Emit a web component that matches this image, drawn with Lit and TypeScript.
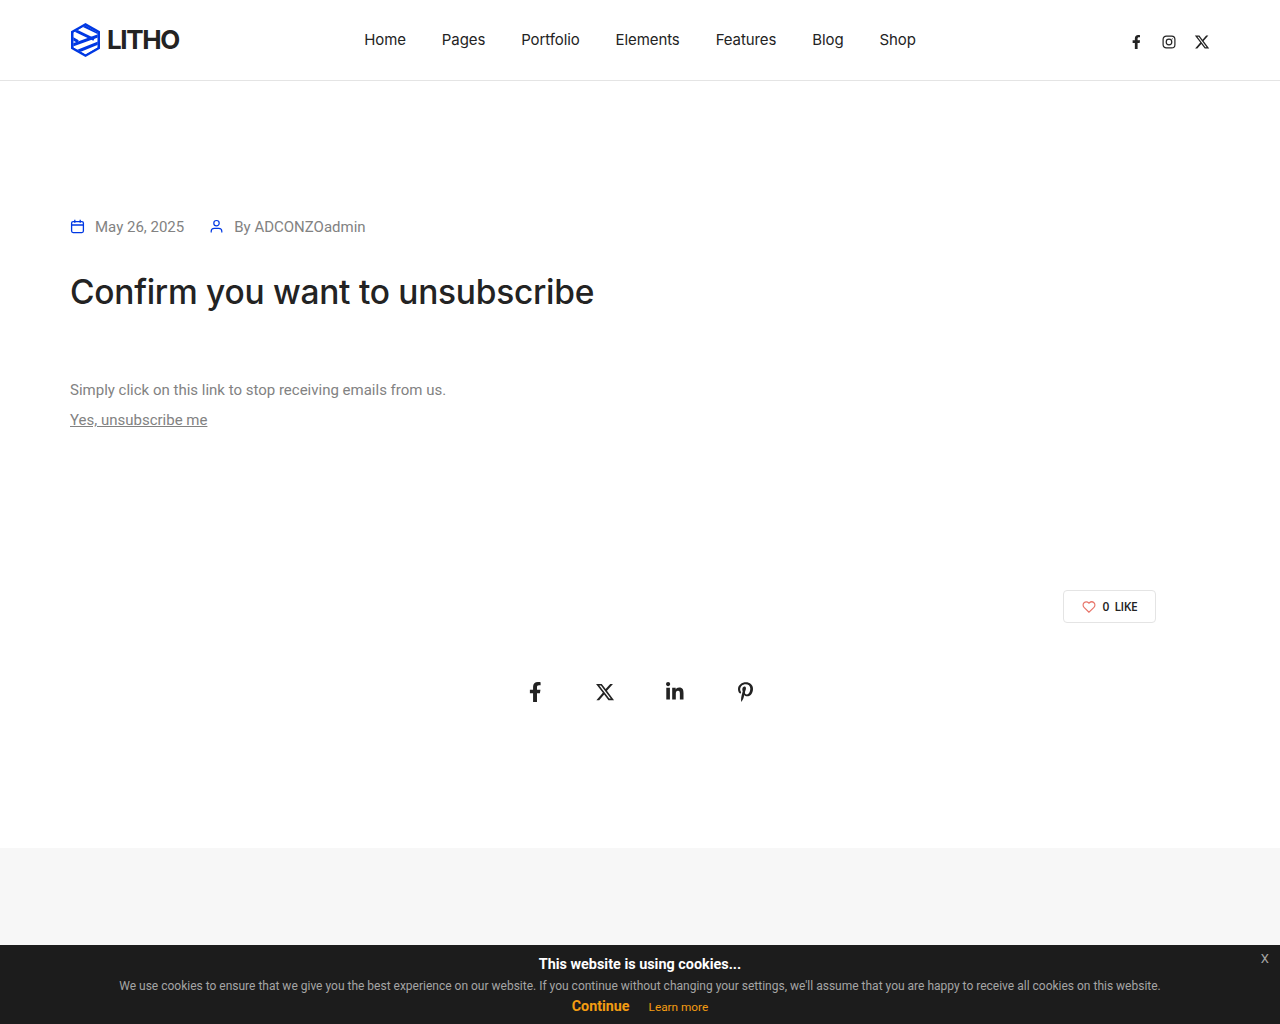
import { LitElement, html, css, svg } from "lit";
import { customElement } from "lit/decorators.js";

const F = { box: "0 0 320 512", d: "M279.14 288l14.22-92.66h-88.91v-60.13c0-25.35 12.42-50.06 52.24-50.06h40.42V6.26S260.43 0 225.36 0c-73.22 0-121.08 44.38-121.08 124.72v70.62H22.89V288h81.39v224h100.17V288z" };
const X = { box: "0 0 512 512", d: "M389.2 48h70.6L305.6 224.2 487 464H345L233.7 318.6 106.5 464H35.8L200.7 275.5 26.8 48H172.4L272.9 180.9 389.2 48zM364.4 421.8h39.1L151.1 88h-42L364.4 421.8z" };
const LI = { box: "0 0 448 512", d: "M100.28 448H7.4V148.9h92.88zM53.79 108.1C24.09 108.1 0 83.5 0 53.8a53.79 53.79 0 0 1 107.58 0c0 29.7-24.1 54.3-53.79 54.3zM447.9 448h-92.68V302.4c0-34.7-.7-79.2-48.29-79.2-48.29 0-55.69 37.7-55.69 76.7V448h-92.78V148.9h89.08v40.8h1.3c12.4-23.5 42.69-48.3 87.88-48.3 94 0 111.28 61.9 111.28 142.3V448z" };
const PIN = { box: "0 0 384 512", d: "M204 6.5C101.4 6.5 0 74.9 0 185.6 0 256 39.6 296 63.6 296c9.9 0 15.6-27.6 15.6-35.4 0-9.3-23.7-29.1-23.7-67.8 0-80.4 61.2-137.4 140.4-137.4 68.1 0 118.5 38.7 118.5 109.8 0 53.1-21.3 152.7-90.3 152.7-24.9 0-46.2-18-46.2-43.8 0-37.8 26.4-74.4 26.4-113.4 0-66.2-93.9-54.2-93.9 25.8 0 16.8 2.1 35.4 9.6 50.7-13.8 59.4-42 147.9-42 209.1 0 18.9 2.7 37.5 4.5 56.4 3.4 3.8 1.7 3.4 6.9 1.5 50.4-69 48.6-82.5 71.4-172.8 12.3 23.4 44.1 36 69.3 36 106.2 0 153.9-103.5 153.9-196.8C384 71.3 298.2 6.5 204 6.5z" };

@customElement("app-root")
export class AppRoot extends LitElement {
  static styles = css`
    :host { display: block; font-family: Roboto, "Liberation Sans", sans-serif; color: #828282; background: #fff; height: 1024px; overflow: hidden; position: relative; }
    a { color: inherit; text-decoration: none; }
    svg { display: block; }
    header { height: 80px; border-bottom: 1px solid #e4e4e4; display: grid; grid-template-columns: 1fr auto 1fr; align-items: center; padding: 0 70px; }
    .logo { display: flex; align-items: center; gap: 6px; }
    .logo-text { font: 700 26px/34px Inter, sans-serif; letter-spacing: -1.4px; color: #232323; }
    nav { display: flex; gap: 36px; font: 400 15px/20px Inter, sans-serif; color: #232323; letter-spacing: -0.1px; }
    .social { display: flex; justify-content: flex-end; align-items: center; gap: 17px; padding: 3px 0 0 0; color: #232323; }
    .social .ico { width: 16px; display: flex; justify-content: center; }
    main { height: 767px; padding: 0 70px; box-sizing: border-box; display: flex; flex-direction: column; }
    .meta { display: flex; align-items: center; margin-top: 136px; font-size: 15px; line-height: 20px; }
    .meta svg { color: #0038e3; margin-top: -2px; }
    .meta span { margin-left: 10px; }
    .meta .by { margin-left: 25px; }
    h1 { margin: 30px 0 0; font: 500 33.5px/50px Inter, sans-serif; color: #232323; letter-spacing: -0.27px; }
    p { margin: 58px 0 0; font-size: 15px; line-height: 30px; }
    .unsub { font-size: 15px; line-height: 30px; text-decoration: underline; }
    .like-row { display: flex; justify-content: flex-end; margin: 155px 54px 0 0; }
    .like { box-sizing: border-box; width: 93px; height: 33px; border: 1px solid #e4e4e4; border-radius: 4px; display: flex; align-items: center; justify-content: center; gap: 7px; font: 600 12px/16px "Open Sans", sans-serif; letter-spacing: -0.4px; color: #232323; }
    .share { display: flex; justify-content: center; margin-top: 59px; color: #232323; }
    .share .ico { width: 70px; display: flex; justify-content: center; }
    .grey { height: 177px; background: #f7f7f7; }
    .cookie { position: absolute; left: 0; right: 0; bottom: 0; height: 79px; background: #1c1c1c; color: #a5a5a5; text-align: center; display: flex; flex-direction: column; align-items: center; }
    .cookie b { color: #fff; font-size: 14.4px; line-height: 20px; margin-top: 10px; font-weight: 700; }
    .cookie .msg { font-size: 12px; line-height: 16px; margin-top: 3px; }
    .actions { display: flex; align-items: baseline; gap: 19px; margin-top: 2px; color: #f39c12; line-height: 20px; }
    .actions strong { font-size: 14.3px; font-weight: 700; }
    .actions span { font-size: 11.8px; }
    .x { position: absolute; top: 5px; right: 11px; font-size: 13px; line-height: 18px; color: #a5a5a5; }
  `;

  private icon(i: { box: string; d: string }, size: number) {
    return html`<span class="ico"><svg height=${size} viewBox=${i.box} fill="currentColor">${svg`<path d=${i.d}></path>`}</svg></span>`;
  }

  render() {
    return html`
      <header>
        <a class="logo" href="#">
          <svg width="31" height="36" viewBox="0 0 31 36" fill="none">
            <defs>
              <clipPath id="hex"><path d="M15.5 3.5 27.7 10.5v15L15.5 32.5 3.3 25.5v-15z"></path></clipPath>
            </defs>
            <path d="M15.5 1 30 9.3v17.4L15.5 35 1 26.7V9.3z" fill="#0038e3"></path>
            <g clip-path="url(#hex)">
              <path d="M15.5 3.5 27.7 10.5v15L15.5 32.5 3.3 25.5v-15z" fill="#fff"></path>
              <path d="M0 6 24 17.500M6 0l26 12.500M0 15 8 19.500" stroke="#0038e3" stroke-width="3"></path>
              <path d="M0 24 32 12.500M6 30 32 19.500M12 36l20-9" stroke="#0038e3" stroke-width="3"></path>
            </g>
          </svg>
          <span class="logo-text">LITHO</span>
        </a>
        <nav>
          <a href="#">Home</a><a href="#">Pages</a><a href="#">Portfolio</a><a href="#">Elements</a><a href="#">Features</a><a href="#">Blog</a><a href="#">Shop</a>
        </nav>
        <div class="social">
          ${this.icon(F, 14)}
          <span class="ico"><svg width="16" height="16" viewBox="0 0 16 16" fill="none" stroke="currentColor" stroke-width="1.2">
            <rect x="2.1" y="2.1" width="11.8" height="11.8" rx="3.2"></rect>
            <circle cx="8" cy="8" r="2.8"></circle>
            <circle cx="11.3" cy="4.7" r=".5" fill="currentColor" stroke="none"></circle>
          </svg></span>
          ${this.icon(X, 16)}
        </div>
      </header>
      <main>
        <div class="meta">
          <svg width="15" height="15" viewBox="0 0 15 15" fill="none" stroke="currentColor" stroke-width="1.3">
            <rect x="1.6" y="2.6" width="11.8" height="11" rx="1.5"></rect>
            <path d="M1.6 6h11.8M4.800 .8v3M10.200 .8v3"></path>
          </svg>
          <span>May 26, 2025</span>
          <svg class="by" width="15" height="15" viewBox="0 0 15 15" fill="none" stroke="currentColor" stroke-width="1.2">
            <circle cx="7.5" cy="4.2" r="2.7"></circle>
            <path d="M2.2 13.500v-1.200c0-1.700 1.300-3 3-3h4.600c1.700 0 3 1.300 3 3v1.200"></path>
          </svg>
          <span>By ADCONZOadmin</span>
        </div>
        <h1>Confirm you want to unsubscribe</h1>
        <p>Simply click on this link to stop receiving emails from us.</p>
        <div><a class="unsub" href="#">Yes, unsubscribe me</a></div>
        <div class="like-row">
          <div class="like">
            <svg width="14" height="14" viewBox="0 0 24 24" fill="none" stroke="#e8756a" stroke-width="2">
              <path d="M12 21 3.500 12.500a5.500 5.500 0 0 1 0-7.800 5.500 5.500 0 0 1 7.800 0l.7.700.7-.7a5.500 5.500 0 0 1 7.800 7.800z"></path>
            </svg>
            <span>0&nbsp; LIKE</span>
          </div>
        </div>
        <div class="share">
          ${this.icon(F, 20)}${this.icon(X, 20)}${this.icon(LI, 20)}${this.icon(PIN, 20)}
        </div>
      </main>
      <div class="grey"></div>
      <div class="cookie">
        <b>This website is using cookies...</b>
        <div class="msg">We use cookies to ensure that we give you the best experience on our website. If you continue without changing your settings, we'll assume that you are happy to receive all cookies on this website.</div>
        <div class="actions"><strong>Continue</strong><span>Learn more</span></div>
        <div class="x">X</div>
      </div>
    `;
  }
}
